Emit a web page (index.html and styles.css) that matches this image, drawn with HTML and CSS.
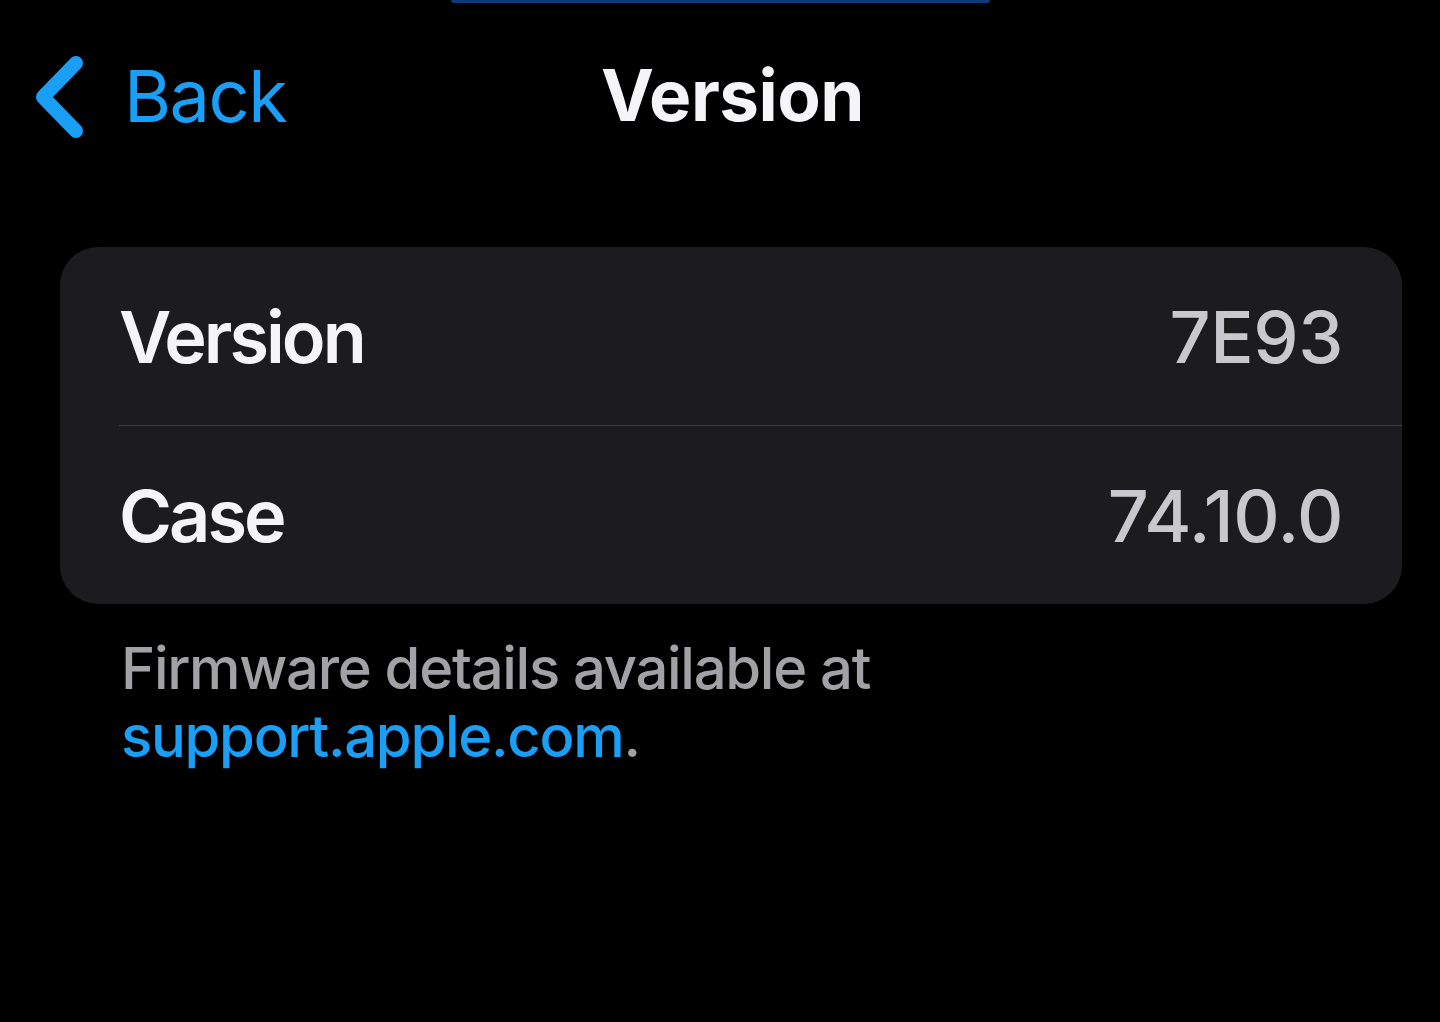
FILE: index.html
```html
<!DOCTYPE html>
<html>
	<head>
		<meta charset="utf-8">
		<title>Version</title>
		<link rel="stylesheet" href="styles.css">
	</head>
	<body>
		<div class="top-bar"></div>
		<div class="nav">
			<a href="javascript:;" class="back">
				<svg class="chevron" width="50" height="84" viewBox="0 0 50 84">
					<path d="M42 8 L9 42 L42 76" fill="none" stroke="#1a9ff6" stroke-width="14" stroke-linecap="round" stroke-linejoin="round"/>
				</svg>
				<span>Back</span>
			</a>
			<h1 class="title">Version</h1>
			<div></div>
		</div>
		<div class="card">
			<div class="row">
				<span class="label">Version</span>
				<span class="value">7E93</span>
			</div>
			<div class="row">
				<span class="label">Case</span>
				<span class="value">74.10.0</span>
			</div>
		</div>
		<p class="footer">Firmware details available at <a href="javascript:;">support.apple.com</a>.</p>
	</body>
</html>
```

FILE: styles.css
```css
* {margin:0; padding:0; box-sizing:border-box;}
body{
	background:#000;
	font-family:Inter, "Noto Sans", sans-serif;
	color:#f5f5f7;
}
a{text-decoration:none;}
.top-bar{
	width:539px;
	height:3px;
	margin:0 auto;
	background:#0c3a7a;
	border-radius:0 0 3px 3px;
}
.nav{
	display:grid;
	grid-template-columns:1fr auto 1fr;
	align-items:center;
	height:190px;
	padding:0 0 0 34px;
	margin-top:-3px;
}
.back{
	display:flex;
	align-items:center;
	gap:40px;
	color:#1a9ff6;
	font-size:72px;
	letter-spacing:-1.5px;
}
.chevron{display:block; margin-top:4px;}
.title{
	font-size:71px;
	font-weight:700;
	letter-spacing:-0.5px;
	margin-left:-9px;
}
.card{
	margin:57px 38px 0 60px;
	background:#1c1c1e;
	border-radius:38px;
	overflow:hidden;
}
.row{
	display:flex;
	justify-content:space-between;
	align-items:center;
	height:178px;
	padding:0 59px 0 59px;
	font-size:72px;
	font-weight:600;
	letter-spacing:-3px;
}
.row + .row{
	height:179px;
	border-top:1px solid #3d3d41;
	margin-left:59px;
	padding-left:0;
}
.label{color:#f5f5f7;}
.value{color:#c8c8cd; font-weight:500; letter-spacing:-0.4px;}
.footer{
	margin:30px 0 0 121px;
	width:800px;
	font-size:58px;
	line-height:68px;
	color:#a1a1a6;
	font-weight:500;
	letter-spacing:-1.3px;
}
.footer a{color:#1a9ff6;}
```
